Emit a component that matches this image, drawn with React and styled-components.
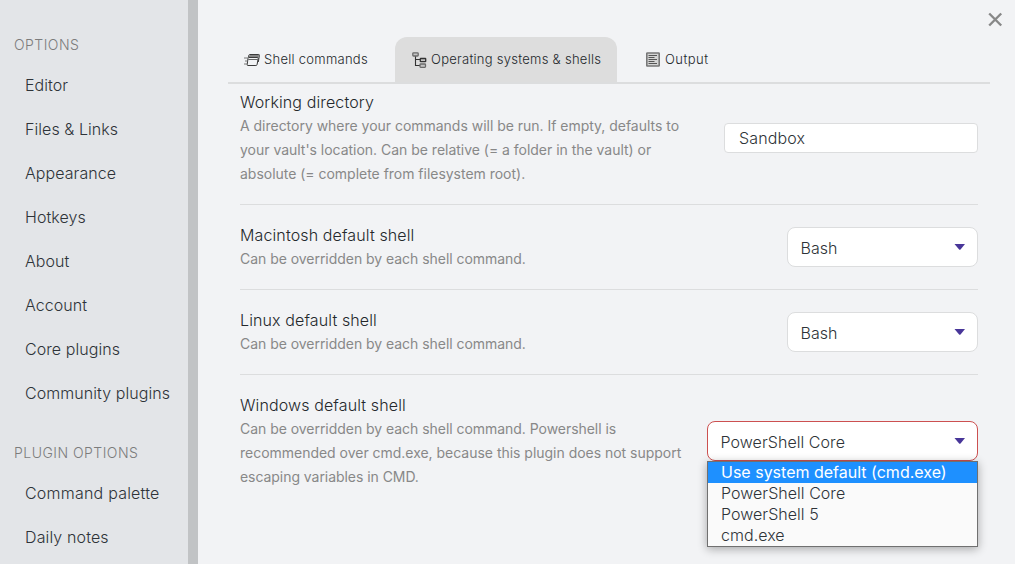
import React from 'react';
import styled, { createGlobalStyle } from 'styled-components';

const GlobalStyle = createGlobalStyle`
  * { box-sizing: border-box; }
  body { margin: 0; background: #f2f3f5; overflow: hidden; }
`;

const Modal = styled.div`
  position: relative;
  display: flex;
  width: 1015px;
  height: 564px;
  overflow: hidden;
  background: #f2f3f5;
  color: #2e3338;
  font-family: Inter, sans-serif;
  font-size: 16px;
  font-weight: 300;
`;

const Sidebar = styled.nav`
  flex: none;
  width: 198px;
  height: 564px;
  padding-top: 27px;
  background: #e3e5e8;
  border-right: 10px solid #c1c3c5;
`;

const NavHeading = styled.div`
  height: 36px;
  line-height: 36px;
  padding-left: 14px;
  color: #7c7c7c;
  font-size: 14px;
  font-weight: 300;
  letter-spacing: 0.47px;
  margin-top: ${(p) => p.$gap || '0'};
`;

const NavItem = styled.div`
  height: 44px;
  line-height: 44px;
  padding-left: 25px;
  white-space: nowrap;
`;

const Text = styled.span`
  display: inline-block;
  white-space: nowrap;
  letter-spacing: ${(p) => p.$spacing || 'inherit'};
`;

const Content = styled.main`
  flex: none;
  width: 817px;
  padding: 37px 25px 0 30px;
`;

const Tabs = styled.div`
  display: flex;
  height: 47px;
  border-bottom: 2px solid #dcddde;
`;

const Tab = styled.div`
  display: flex;
  align-items: center;
  width: ${(p) => p.$width};
  height: 45px;
  padding-left: ${(p) => p.$inset};
  gap: ${(p) => p.$gap || '4px'};
  border-radius: 12px 12px 0 0;
  background: ${(p) => (p.$active ? '#dddddd' : 'transparent')};
  color: #24282c;
  font-size: 13px;
  font-weight: 300;
  letter-spacing: 0.27px;
  white-space: nowrap;

  svg { flex: none; }
  span { padding-bottom: 2px; }
`;

const Settings = styled.div`
  width: 738px;
  margin-left: 12px;
`;

const Row = styled.section`
  display: flex;
  justify-content: space-between;
  align-items: center;
  height: ${(p) => p.$height};
  padding-top: ${(p) => p.$top || '0'};
  border-bottom: 1px solid ${(p) => (p.$last ? 'transparent' : '#dcddde')};
`;

const Info = styled.div`
  align-self: flex-start;
`;

const Name = styled.div`
  height: 24px;
  line-height: 24px;
  color: #24282c;
  letter-spacing: 0.12px;
`;

const Description = styled.div`
  color: #888;
  font-size: 14px;
  font-weight: 400;
  line-height: 24px;
  letter-spacing: -0.02px;

  span { display: block; }
`;

const Input = styled.div`
  width: 254px;
  height: 30px;
  margin-top: ${(p) => p.$top || '0'};
  padding-left: 14px;
  border: 1px solid #dcddde;
  border-radius: 4px;
  background: #fff;
  line-height: 29px;
  letter-spacing: 0.15px;
`;

const Select = styled.div`
  position: relative;
  align-self: flex-start;
  display: flex;
  align-items: center;
  justify-content: space-between;
  width: ${(p) => p.$width};
  height: 40px;
  margin-top: ${(p) => p.$top};
  padding: 1px 12px 0 12.5px;
  border: 1px solid ${(p) => (p.$open ? '#cc5050' : '#dcddde')};
  border-radius: 8px;
  background: #fff;
  letter-spacing: 0.06px;
`;

const Arrow = styled.svg`
  width: 11px;
  height: 6px;
  margin-top: -1px;
`;

const Menu = styled.div`
  position: absolute;
  top: 39px;
  left: -1px;
  width: 271px;
  height: 86px;
  border: 1px solid #707070;
  background: #fafafa;
  box-shadow: 0 2px 9px rgba(0, 0, 0, 0.32);
`;

const Option = styled.div`
  height: 21px;
  line-height: 21px;
  padding-left: 13px;
  color: ${(p) => (p.$active ? '#fff' : '#2e3338')};
  background: ${(p) => (p.$active ? '#1e90ff' : 'transparent')};
  font-weight: ${(p) => (p.$active ? 400 : 300)};
  letter-spacing: ${(p) => (p.$active ? '0' : '0.04px')};
`;

const Close = styled.svg`
  position: absolute;
  top: 12px;
  left: 988px;
`;

const ShellIcon = () => (
  <svg width="16" height="14" viewBox="0 0 16 14" fill="none" stroke="#3a3a3a" strokeWidth="1">
    <path d="M4.5 4L4.9 2.1Q5.1 1.5 5.8 1.5H14.8Q15.6 1.5 15.4 2.5L14.3 9" />
    <path d="M5.5 2.5H15M4.8 3.5H14.8" stroke="#858585" />
    <path d="M4.5 4.5H13.8Q14.4 4.5 14.2 5.3L13.1 11.5Q12.9 12.5 11.9 12.5H4Q3 12.5 3.2 11.5L4 5.3Q4.1 4.5 4.5 4.5Z" />
    <path d="M4.3 6.5H13.8" stroke="#666" />
    <path d="M0 5H4M1 8H3.5M0 11H3" stroke="#777" />
  </svg>
);

const TreeIcon = () => (
  <svg width="15" height="16" viewBox="0 0 15 16" fill="#c4c4c4" stroke="#6a6a6a" strokeWidth="1.3">
    <path d="M3.5 4V13.5H8.5M3.5 7.5H8.5" fill="none" stroke="#333" strokeWidth="1.1" />
    <rect x=".8" y=".8" width="5.4" height="3.2" rx=".7" />
    <rect x="8.3" y="6.5" width="5.4" height="3.2" rx=".4" stroke="#333" />
    <rect x="8" y="12" width="5.5" height="3.3" rx=".7" />
  </svg>
);

const OutputIcon = () => (
  <svg width="14" height="15" viewBox="0 0 14 15" fill="none" stroke="#555">
    <rect x=".8" y="1" width="12.4" height="13" rx=".6" fill="#d4d4d4" stroke="#777" strokeWidth="1.6" />
    <path d="M2.5 3.5H11M2.5 5.5H8.5M2.5 7.5H11M2.5 9.5H8.5M2.5 11.5H11" strokeWidth="1" />
  </svg>
);

const Caret = () => (
  <Arrow viewBox="0 0 11 6"><path d="M.5 0H11L6.5 5.4Q5.8 6 5.1 5.4Z" fill="#483699" /></Arrow>
);

const options = ['Editor', 'Files & Links', 'Appearance', 'Hotkeys', 'About', 'Account', 'Core plugins', 'Community plugins'];

export default function App() {
  return (
    <Modal>
      <GlobalStyle />
      <Sidebar>
        <NavHeading>OPTIONS</NavHeading>
        {options.map((label) => <NavItem key={label}><Text $spacing="0.07px">{label}</Text></NavItem>)}
        <NavHeading $gap="20px">PLUGIN OPTIONS</NavHeading>
        <NavItem><Text $spacing="0.22px">Command palette</Text></NavItem>
        <NavItem><Text $spacing="0.13px">Daily notes</Text></NavItem>
      </Sidebar>
      <Content>
        <Tabs>
          <Tab $width="167px" $inset="16px"><ShellIcon /><Text>Shell commands</Text></Tab>
          <Tab $width="222px" $inset="17px" $active><TreeIcon /><Text>Operating systems &amp; shells</Text></Tab>
          <Tab $width="127px" $inset="29px" $gap="5px"><OutputIcon /><Text $spacing="0.45px">Output</Text></Tab>
        </Tabs>
        <Settings>
          <Row $height="121px" $top="6px">
            <Info>
              <Name><Text>Working directory</Text></Name>
              <Description>
                <Text>A directory where your commands will be run. If empty, defaults to</Text>
                <Text>your vault's location. Can be relative (= a folder in the vault) or</Text>
                <Text>absolute (= complete from filesystem root).</Text>
              </Description>
            </Info>
            <Input $top="-18px"><Text>Sandbox</Text></Input>
          </Row>
          <Row $height="85px" $top="18px">
            <Info>
              <Name><Text>Macintosh default shell</Text></Name>
              <Description><Text $spacing="-0.04px">Can be overridden by each shell command.</Text></Description>
            </Info>
            <Select $width="191px" $top="4px"><Text>Bash</Text><Caret /></Select>
          </Row>
          <Row $height="85px" $top="18px">
            <Info>
              <Name><Text>Linux default shell</Text></Name>
              <Description><Text $spacing="-0.04px">Can be overridden by each shell command.</Text></Description>
            </Info>
            <Select $width="191px" $top="4px"><Text>Bash</Text><Caret /></Select>
          </Row>
          <Row $height="160px" $top="18px" $last>
            <Info>
              <Name><Text>Windows default shell</Text></Name>
              <Description>
                <Text $spacing="-0.04px">Can be overridden by each shell command. Powershell is</Text>
                <Text>recommended over cmd.exe, because this plugin does not support</Text>
                <Text $spacing="-0.05px">escaping variables in CMD.</Text>
              </Description>
            </Info>
            <Select $width="271px" $top="28px" $open>
              <Text>PowerShell Core</Text><Caret />
              <Menu>
                <Option $active><Text>Use system default (cmd.exe)</Text></Option>
                <Option><Text>PowerShell Core</Text></Option>
                <Option><Text>PowerShell 5</Text></Option>
                <Option><Text>cmd.exe</Text></Option>
              </Menu>
            </Select>
          </Row>
        </Settings>
      </Content>
      <Close width="15" height="15" viewBox="0 0 15 15" stroke="#888" strokeWidth="2.4" fill="none">
        <path d="M1.2 1.5L13.2 13.5M13.2 1.5L1.2 13.5" />
      </Close>
    </Modal>
  );
}
